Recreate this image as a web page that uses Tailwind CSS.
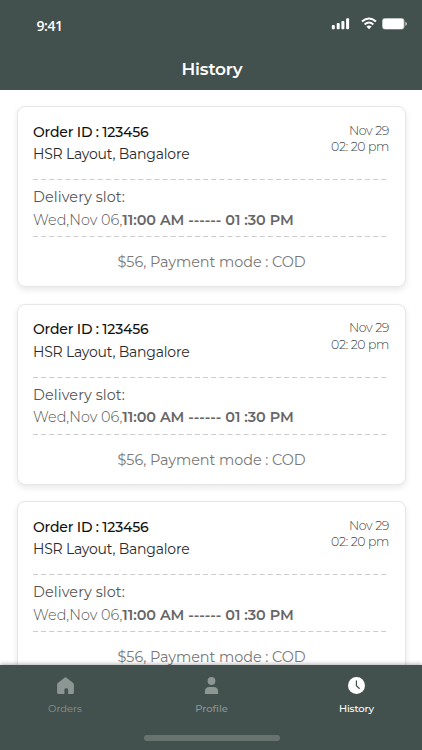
<!DOCTYPE html>
<html lang="en">
<head>
<meta charset="utf-8">
<meta name="viewport" content="width=device-width, initial-scale=1">
<title>History</title>
<script src="https://cdn.jsdelivr.net/npm/@tailwindcss/browser@4"></script>
</head>
<body class="bg-white font-['Montserrat','Inter',sans-serif]">
<div class="relative flex h-[750px] w-[422px] flex-col overflow-hidden">
  <header class="flex h-[90px] shrink-0 flex-col bg-[#42514d] text-white">
    <div class="flex h-[52px] items-center justify-between pr-[15px] pl-[36.5px]">
      <span class="font-['Open_Sans',sans-serif] text-[14px] leading-5 font-semibold tracking-[-0.45px]">9:41</span>
      <svg class="-mt-1 h-[14px] w-[76px]" viewBox="0 0 76 14" fill="white">
        <rect x="0.8" y="8" width="3" height="4.3" rx="1"/><rect x="5.7" y="6" width="3" height="6.3" rx="1"/><rect x="10.4" y="4" width="3" height="8.3" rx="1"/><rect x="15.1" y="1.2" width="3" height="11.1" rx="1"/>
        <g fill="none" stroke="white" stroke-width="2"><path d="M31 4.6Q38 -1.6 45 4.6"/><path d="M33.6 7.4Q38 3.5 42.4 7.4"/></g>
        <path d="M35.4 9.4Q38 7.4 40.6 9.4L38 12.2Z"/>
        <rect x="51" y="1" width="22.5" height="11.6" rx="3" fill="#a7afad"/><rect x="51.7" y="1.7" width="21" height="10.2" rx="2.4"/>
        <path d="M74.3 4.7Q76 5.4 76 6.8T74.3 8.9Z" fill="#c4cac8"/>
      </svg>
    </div>
    <h1 class="mt-[5px] pl-[2px] text-center text-[17px] leading-6 font-semibold tracking-[-0.2px]">History</h1>
  </header>

  <main id="orders" class="flex flex-col gap-[16.5px] px-[16.5px] pt-4">
    <article class="flex h-[181px] shrink-0 flex-col rounded-[8px] border border-[#e6e6e6] bg-white px-[15px] shadow-[0_3px_6px_rgba(0,0,0,0.09)]">
      <div class="flex h-[72px] justify-between pt-[13.5px]">
        <div class="pl-[0.5px] text-[14px] leading-[22.7px] text-[#111]">
          <h2 class="font-medium tracking-[-0.2px] whitespace-nowrap">Order ID : 123456</h2>
          <p class="tracking-[-0.2px] text-[#2b2b2b]">HSR Layout, Bangalore</p>
        </div>
        <div class="pt-[2px] pr-[0.5px] text-right text-[12.5px] leading-[16.5px] font-light tracking-[-0.36px] text-[#444]">
          <p>Nov 29</p>
          <p>02: 20 pm</p>
        </div>
      </div>
      <svg class="h-px w-[356px] shrink-0" viewBox="0 0 356 1"><path d="M0 .5H356" stroke="#cccccc" stroke-dasharray="5 3.1"/></svg>
      <div class="flex h-[56px] flex-col pt-[6px] pl-[0.5px] text-[14.4px] leading-[22.5px] text-[#666]">
        <p class="tracking-[0.09px] text-[#555]">Delivery slot:</p>
        <p class="whitespace-nowrap"><span class="font-light tracking-[0.02px] text-[#555]">Wed,Nov 06,</span><span class="font-semibold tracking-[-0.04px]">11:00 AM ------ 01 :30 PM</span></p>
      </div>
      <svg class="h-px w-[356px] shrink-0" viewBox="0 0 356 1"><path d="M0 .5H356" stroke="#cccccc" stroke-dasharray="5 3.1"/></svg>
      <p class="pt-[14px] pl-px text-center text-[14.4px] leading-[22px] tracking-[-0.05px] text-[#777]">$56, Payment mode : COD</p>
    </article>
  </main>

  <nav class="absolute inset-x-0 bottom-0 h-[85px] bg-[#42514d] text-[10px] leading-4 text-[#8c9693] shadow-[0_-1px_4px_rgba(0,0,0,0.3)]">
    <div class="flex justify-between pt-[11px] pr-[26px] pl-[25px]">
      <a class="flex w-20 flex-col items-center gap-[6px]">
        <svg class="h-[19px] w-[19px]" viewBox="0 0 19 19" fill="currentColor"><path d="M9.5 1.2Q10 1.2 10.5 1.7L17.2 7.1Q17.9 7.8 17.9 8.8V16.5Q17.9 18 16.4 18H12.1V13.7Q12.1 12.2 10.7 12.2H9.8Q8.4 12.2 8.4 13.7V18H2.6Q1.1 18 1.1 16.5V8.8Q1.1 7.8 1.8 7.1L8.5 1.7Q9 1.2 9.5 1.2Z"/></svg>
        <span>Orders</span>
      </a>
      <a class="flex w-20 flex-col items-center gap-[6px] pl-[2px]">
        <svg class="h-[19px] w-[19px]" viewBox="0 0 19 19" fill="currentColor"><circle cx="9.5" cy="5" r="3.9"/><path d="M2.9 18V15.5Q2.9 10.9 7.3 10.9H11.7Q16.1 10.9 16.1 15.5V18Z"/></svg>
        <span class="font-medium">Profile</span>
      </a>
      <a class="flex w-20 flex-col items-center gap-[6px] pl-px font-medium text-white">
        <svg class="h-[19px] w-[19px]" viewBox="0 0 19 19"><circle cx="9.5" cy="9.5" r="8.5" fill="white"/><path d="M9.4 4.6V9.7L12.6 12.8" fill="none" stroke="#42514d" stroke-width="1.2"/></svg>
        <span class="tracking-[-0.1px]">History</span>
      </a>
    </div>
    <div class="mt-[18px] ml-[144px] h-[6px] w-[136px] rounded-full bg-[#68736f]"></div>
  </nav>
</div>
<script>
  const list = document.getElementById('orders');
  const card = list.firstElementChild;
  for (let i = 0; i < 2; i++) list.append(card.cloneNode(true));
</script>
</body>
</html>
